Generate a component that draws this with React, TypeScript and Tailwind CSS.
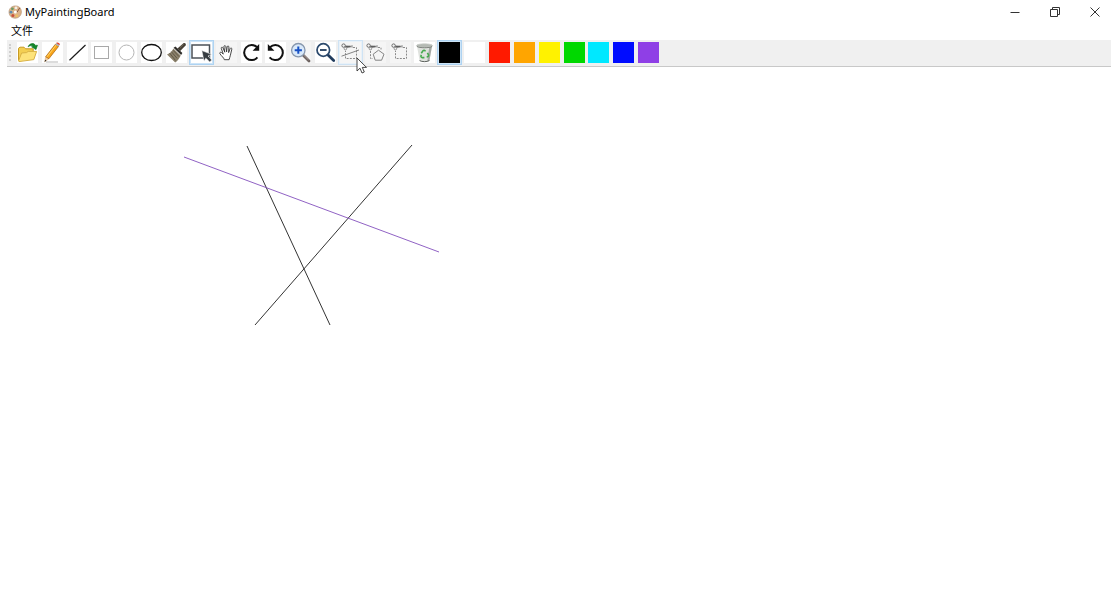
import { useState, type ReactNode } from "react";

type Tool = { name: string; icon: ReactNode; plain?: boolean };

const scissors = (
  <g fill="none" stroke="#5f5f5f" strokeWidth="0.9">
    <circle cx="3.6" cy="3.6" r="1.7" />
    <circle cx="5.4" cy="6.6" r="1.3" stroke="#8a8a8a" />
    <path d="M5.2 4.2 13 5M6.4 5.8 12.6 3.6" stroke="#8a8a8a" />
    <path d="M5.4 4.5h5" strokeWidth="1.6" />
  </g>
);

const tools: Tool[] = [
  {
    name: "Open",
    icon: (
      <>
        <path d="M1.5 18.5V6.3L3 5.2h4l1.6 1.6h7.6v3" fill="#f3cf52" stroke="#c89a23" />
        <path d="M1.5 19 4.6 11l5-.4 1.6-1.2h8.4L16.8 17.6 2 19.6z" fill="#fde37a" stroke="#d9b245" strokeLinejoin="round" />
        <path d="M11.2 4.6C12.6 1 17.2.6 18.4 3.4l2.1-.2-1.5 4.4-4.5-2.8 1.7-.4c-1-1.4-3-1.1-5 .4z" fill="#118a2a" stroke="#096a1c" strokeWidth="0.6" />
      </>
    ),
  },
  {
    name: "Pencil",
    icon: (
      <>
        <path d="M4 20h12" stroke="#c4c4c4" strokeWidth="1.2" />
        <path d="m2.6 20 1.1-5.3 3.2 2z" fill="#f2cda0" stroke="#c79a68" strokeWidth="0.4" />
        <path d="m2.6 20 .5-2.3 1.3.9z" fill="#222" />
        <path d="M3.7 14.7 13.3 2.3l3.2 2.2-9.6 12.2z" fill="#f9a51a" stroke="#a8610b" strokeWidth="0.7" />
        <path d="M4.9 14.9 14.2 3" stroke="#ffd66a" strokeWidth="1" />
        <path d="m13.3 2.3.9-1.2 3.2 2.2-.9 1.2z" fill="#a8b2b8" />
        <path d="m14.2 1.1.6-.6c1.3-.5 3.2.8 3 2l-.4.8z" fill="#df4131" />
      </>
    ),
  },
  { name: "Line", icon: <path d="M2.5 18.2 18.5 3" stroke="#1a1a1a" strokeWidth="1.2" /> },
  { name: "Rectangle", icon: <rect x="3.5" y="4.5" width="14" height="12" fill="none" stroke="#a9a9a9" /> },
  { name: "Circle", icon: <circle cx="10.5" cy="10.5" r="7.5" fill="none" stroke="#b5b5b5" /> },
  { name: "Ellipse", icon: <ellipse cx="10.5" cy="10.5" rx="9.8" ry="8" fill="none" stroke="#111" strokeWidth="1.3" /> },
  {
    name: "Brush",
    icon: (
      <>
        <path d="m11.4 6.4 6-5.2c1.7-.8 3.1.8 2.2 2.2L14.2 9z" fill="#463f35" />
        <path d="m14 5.6 3.7-3.5" stroke="#83786a" strokeWidth="0.8" />
        <path d="m7.6 5.8 1.8-1.2 7 6.5-1.3 1.9z" fill="#302e2a" />
        <path d="m7.4 6.4 7.3 7c-1.1 2.9-3.2 5.4-5.5 7L1 12.4c2.6-1.1 5.2-3.2 6.4-6z" fill="#8b816b" />
        <path d="m5.3 9.6 5.8 6.8M3.6 11l5.8 7.4M7 8.2l6 6.4" stroke="#554d3e" strokeWidth="0.8" />
      </>
    ),
  },
  {
    name: "Select",
    icon: (
      <>
        <rect x="1" y="3" width="17.5" height="13" fill="none" stroke="#4b5258" strokeWidth="1.5" />
        <path d="m10.8 8.6 9.7 3.7-3.5 1.7 3.7 4-2 1.9-3.9-4-1.7 3.4z" fill="#363c41" stroke="#fff" strokeWidth="0.5" />
      </>
    ),
  },
  {
    name: "Pan",
    plain: true,
    icon: (
      <path
        d="M8.3 17.7c-.3-1.9-2.8-3.5-4.4-6-.6-1.1.6-1.9 1.6-1.2l1.8 1.6-2-5.6c-.4-1.4 1.2-1.8 1.7-.6l1.8 4.3-.9-5.4c-.1-1.4 1.6-1.6 1.9-.3l.8 5.4.5-5c.2-1.3 1.9-1.1 1.8.2l-.3 5.5 1.5-4c.5-1.1 2-.7 1.7.6l-1.4 6c-.2 1.8-1.1 2.7-1.3 4.5z"
        fill="#fff"
        stroke="#333"
        strokeWidth="0.9"
        strokeLinejoin="round"
      />
    ),
  },
  {
    name: "Redo",
    icon: (
      <>
        <path d="M16.4 15.4A7.5 7.5 0 1 1 16 5.3" fill="none" stroke="#111" strokeWidth="2" />
        <path d="M18.2 2v6.7h-6.6z" fill="#111" />
      </>
    ),
  },
  {
    name: "Undo",
    icon: (
      <>
        <path d="M4.6 15.4A7.5 7.5 0 1 0 5 5.3" fill="none" stroke="#111" strokeWidth="2" />
        <path d="M2.8 2v6.7h6.6z" fill="#111" />
      </>
    ),
  },
  {
    name: "Zoom in",
    plain: true,
    icon: (
      <>
        <path d="m13 13 6 6" stroke="#6c6260" strokeWidth="2.8" strokeLinecap="round" />
        <path d="m14 13.4 4.6 4.5" stroke="#b7a9a4" strokeWidth="0.8" />
        <circle cx="8.3" cy="8.2" r="6.7" fill="#d9e9fa" stroke="#8797ad" strokeWidth="1.3" />
        <path d="M4.7 8.2h7.2M8.3 4.6v7.2" stroke="#1851c4" strokeWidth="2" />
      </>
    ),
  },
  {
    name: "Zoom out",
    icon: (
      <>
        <path d="m13 13 5.7 5.6" stroke="#203b5d" strokeWidth="2.8" strokeLinecap="round" />
        <circle cx="8.3" cy="8" r="6.3" fill="#fff" stroke="#2b496c" strokeWidth="1.7" />
        <path d="M5 8h6.6" stroke="#203b5d" strokeWidth="1.8" />
      </>
    ),
  },
  {
    name: "Clip with line",
    plain: true,
    icon: (
      <>
        {scissors}
        <path d="M13 5.5h3.5v11h-11V8.8" fill="none" stroke="#8a8a8a" strokeDasharray="2 1.2" />
        <path d="M1.5 14.2 19 8" stroke="#777" strokeWidth="0.9" />
      </>
    ),
  },
  {
    name: "Clip polygon",
    plain: true,
    icon: (
      <>
        {scissors}
        <path d="M13 5.5h3v2M5.5 9v7.5H8" fill="none" stroke="#8a8a8a" strokeDasharray="2 1.2" />
        <path d="m13.5 8.2 5.5 4-2.4 6h-6.4l-2-6z" fill="none" stroke="#777" strokeWidth="0.9" />
      </>
    ),
  },
  {
    name: "Clip rectangle",
    plain: true,
    icon: (
      <>
        {scissors}
        <path d="M13 5.5h3.5v11h-11V8.8" fill="none" stroke="#8a8a8a" strokeDasharray="2 1.2" />
      </>
    ),
  },
  {
    name: "Clear",
    icon: (
      <>
        <path d="m3 4 2.6 14.8c2.5 1.3 7.3 1.3 9.8 0L18 4z" fill="#dfe2de" />
        <path d="m15.2 5.5-1.9 13.7 2.1-.4L18 4z" fill="#a4a8a4" />
        <path d="M5.6 18.6c2.5 1.4 7.3 1.4 9.8 0" stroke="#5d625d" />
        <ellipse cx="10.5" cy="3.6" rx="8" ry="1.8" fill="#b4b9b3" stroke="#c9ccc8" strokeWidth="0.8" />
        <path d="M2.8 4.4c2.8 1.8 12.6 1.8 15.4 0" fill="none" stroke="#6b706b" strokeWidth="0.8" />
        <path d="M7.3 11.2 9 8.8c.8-.9 1.7-.6 2.5.6M13.4 10.8l1.1 2c.3 1.4-.6 2-1.8 2.1M10.4 15.6H8.2c-1.4-.3-1.6-1.4-.8-2.7" fill="none" stroke="#45aa4d" strokeWidth="1.6" />
      </>
    ),
  },
];

const colors = [
  { name: "Black", fill: "bg-black" },
  { name: "White", fill: "bg-white" },
  { name: "Red", fill: "bg-[#ff1a00]" },
  { name: "Orange", fill: "bg-[#ffa500]" },
  { name: "Yellow", fill: "bg-[#fff200]" },
  { name: "Green", fill: "bg-[#00d800]" },
  { name: "Cyan", fill: "bg-[#00e8ff]" },
  { name: "Blue", fill: "bg-[#000cff]" },
  { name: "Purple", fill: "bg-[#8f3fe6]" },
];

const lines = [
  { x1: 247, y1: 79, x2: 330, y2: 258, stroke: "#1c1c1c" },
  { x1: 412, y1: 78, x2: 255, y2: 258, stroke: "#1c1c1c" },
  { x1: 184, y1: 90, x2: 439, y2: 185, stroke: "#8350bd" },
];

const cell = "flex h-[25px] w-full items-center justify-center border";
const idle = "border-transparent";
const checked = "border-[#aed3f2] bg-[#cce4f7]";
const hovered = "border-[#cfe3f4] bg-[#e8f1f8]";

function Palette() {
  return (
    <svg viewBox="0 0 14 14" className="size-3.5" aria-hidden="true">
      <path d="M7.4.9c3.6 0 6 2.5 6 5.9 0 3.7-2.7 6.4-6.3 6.4S1 10.5 1 7 3.8.9 7.4.9z" fill="#dcb389" stroke="#b08a68" strokeWidth="0.6" />
      <circle cx="4.4" cy="3.8" r="1.4" fill="#6a9a63" />
      <circle cx="8" cy="2.9" r="1.4" fill="#f4eee5" />
      <circle cx="3" cy="7.2" r="1.4" fill="#5e8cb0" />
      <circle cx="4.9" cy="10.4" r="1.5" fill="#c9503c" />
      <circle cx="8.8" cy="10.8" r="1.3" fill="#f0c060" />
      <circle cx="7.4" cy="7" r="1.5" fill="#fff" />
      <path d="m9 7.2 2.8-4.4" stroke="#7a4a38" strokeWidth="0.9" />
    </svg>
  );
}

export default function App() {
  const [tool, setTool] = useState("Select");
  const [color, setColor] = useState("Black");

  return (
    <div className="flex min-h-screen flex-col bg-white font-['Noto_Sans','Noto_Sans_CJK_SC',sans-serif] text-[11px] text-black">
      <header className="flex h-6 items-center justify-between pr-2.5 pl-2">
        <div className="flex items-center gap-[3px]">
          <Palette />
          <h1 className="leading-4">MyPaintingBoard</h1>
        </div>
        <div className="flex gap-4">
          <button type="button" aria-label="Minimize" className="flex size-6 items-center justify-center">
            <svg viewBox="0 0 10 10" className="size-2.5"><path d="M.5 5.5h9" stroke="#333" /></svg>
          </button>
          <button type="button" aria-label="Restore" className="flex size-6 items-center justify-center">
            <svg viewBox="0 0 10 10" className="size-2.5" fill="none" stroke="#333">
              <path d="M.5 2.5h7v7h-7zM2.5 2.5v-2h7v7h-2" />
            </svg>
          </button>
          <button type="button" aria-label="Close" className="flex size-6 items-center justify-center">
            <svg viewBox="0 0 10 10" className="size-2.5"><path d="m.5.5 9 9m0-9-9 9" stroke="#333" /></svg>
          </button>
        </div>
      </header>

      <nav className="flex h-4 items-start pl-[11px]">
        <button type="button" className="leading-[14px]">文件</button>
      </nav>

      <div role="toolbar" aria-label="Tools" className="mr-1.5 ml-[7px] flex border-b border-[#c8c8c8] bg-[#f0f0f0] pb-px">
        <div className="my-1 mr-1 ml-0.5 w-0.5 border-l-2 border-dotted border-[#cfcfcf]" />
        <div className="grid w-[646px] grid-cols-[repeat(26,minmax(0,1fr))]">
          {tools.map((t) => (
            <button
              key={t.name}
              type="button"
              aria-label={t.name}
              aria-pressed={tool === t.name}
              onClick={() => setTool(t.name)}
              className={`relative ${cell} ${tool === t.name ? checked : t.name === "Clip with line" ? hovered : idle}`}
            >
              <svg viewBox="0 0 21 21" className={`size-[21px] shrink-0 ${t.plain ? "bg-[#f5f5f5]" : "bg-white"}`} fill="none">
                {t.icon}
              </svg>
              {t.name === "Clip with line" && (
                <svg viewBox="0 0 12 18" className="pointer-events-none absolute top-4 left-[17px] z-10 h-[18px] w-3">
                  <path d="M1 1v13l3-2.8 2 4.8 2.3-1-2-4.6h4.2z" fill="#fff" stroke="#333" strokeWidth="0.9" />
                </svg>
              )}
            </button>
          ))}
          {colors.map((c) => (
            <button
              key={c.name}
              type="button"
              aria-label={c.name}
              aria-pressed={color === c.name}
              onClick={() => setColor(c.name)}
              className={`${cell} ${color === c.name ? checked : idle}`}
            >
              <span className={`size-[21px] shrink-0 ${c.fill}`} />
            </button>
          ))}
        </div>
      </div>

      <main className="flex flex-1">
        <svg className="w-full flex-1" role="img" aria-label="Canvas">
          {lines.map((l) => (
            <line key={l.x1} {...l} strokeWidth="0.9" />
          ))}
        </svg>
      </main>
    </div>
  );
}
